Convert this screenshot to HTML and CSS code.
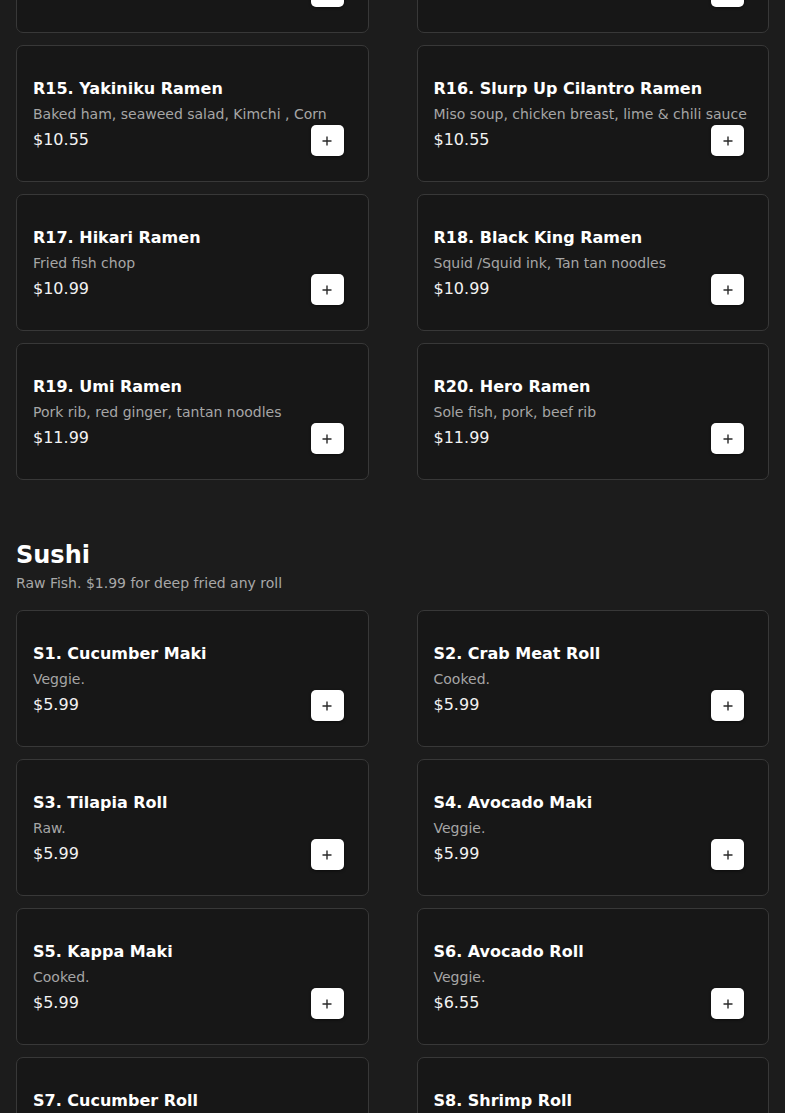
FILE: index.html
```html
<!DOCTYPE html>
<html lang="en">
<head>
<meta charset="utf-8">
<title>Menu</title>
<link rel="stylesheet" href="styles.css">
</head>
<body>
<main class="menu">
  <section class="section section-first">
    <div class="grid">
      <div class="card"><h3 class="item-title">R13. Tonkotsu Ramen</h3><p class="item-desc">Pork belly, egg, bamboo shoots</p><div class="item-row"><span class="price">$10.55</span><button class="add" aria-label="Add"><svg viewBox="0 0 10 10" width="10" height="10"><path d="M5 0.5V9.5M0.5 5H9.5" /></svg></button></div></div>
      <div class="card"><h3 class="item-title">R14. Spicy Miso Ramen</h3><p class="item-desc">Ground pork, corn, scallion</p><div class="item-row"><span class="price">$10.55</span><button class="add" aria-label="Add"><svg viewBox="0 0 10 10" width="10" height="10"><path d="M5 0.5V9.5M0.5 5H9.5" /></svg></button></div></div>
      <div class="card"><h3 class="item-title">R15. Yakiniku Ramen</h3><p class="item-desc">Baked ham, seaweed salad, Kimchi , Corn</p><div class="item-row"><span class="price">$10.55</span><button class="add" aria-label="Add"><svg viewBox="0 0 10 10" width="10" height="10"><path d="M5 0.5V9.5M0.5 5H9.5" /></svg></button></div></div>
      <div class="card"><h3 class="item-title">R16. Slurp Up Cilantro Ramen</h3><p class="item-desc">Miso soup, chicken breast, lime &amp; chili sauce</p><div class="item-row"><span class="price">$10.55</span><button class="add" aria-label="Add"><svg viewBox="0 0 10 10" width="10" height="10"><path d="M5 0.5V9.5M0.5 5H9.5" /></svg></button></div></div>
      <div class="card"><h3 class="item-title">R17. Hikari Ramen</h3><p class="item-desc">Fried fish chop</p><div class="item-row"><span class="price">$10.99</span><button class="add" aria-label="Add"><svg viewBox="0 0 10 10" width="10" height="10"><path d="M5 0.5V9.5M0.5 5H9.5" /></svg></button></div></div>
      <div class="card"><h3 class="item-title">R18. Black King Ramen</h3><p class="item-desc">Squid /Squid ink, Tan tan noodles</p><div class="item-row"><span class="price">$10.99</span><button class="add" aria-label="Add"><svg viewBox="0 0 10 10" width="10" height="10"><path d="M5 0.5V9.5M0.5 5H9.5" /></svg></button></div></div>
      <div class="card"><h3 class="item-title">R19. Umi Ramen</h3><p class="item-desc">Pork rib, red ginger, tantan noodles</p><div class="item-row"><span class="price">$11.99</span><button class="add" aria-label="Add"><svg viewBox="0 0 10 10" width="10" height="10"><path d="M5 0.5V9.5M0.5 5H9.5" /></svg></button></div></div>
      <div class="card"><h3 class="item-title">R20. Hero Ramen</h3><p class="item-desc">Sole fish, pork, beef rib</p><div class="item-row"><span class="price">$11.99</span><button class="add" aria-label="Add"><svg viewBox="0 0 10 10" width="10" height="10"><path d="M5 0.5V9.5M0.5 5H9.5" /></svg></button></div></div>
    </div>
  </section>

  <section class="section section-next">
    <h2 class="section-title">Sushi</h2>
    <p class="section-sub">Raw Fish. $1.99 for deep fried any roll</p>
    <div class="grid">
      <div class="card"><h3 class="item-title">S1. Cucumber Maki</h3><p class="item-desc">Veggie.</p><div class="item-row"><span class="price">$5.99</span><button class="add" aria-label="Add"><svg viewBox="0 0 10 10" width="10" height="10"><path d="M5 0.5V9.5M0.5 5H9.5" /></svg></button></div></div>
      <div class="card"><h3 class="item-title">S2. Crab Meat Roll</h3><p class="item-desc">Cooked.</p><div class="item-row"><span class="price">$5.99</span><button class="add" aria-label="Add"><svg viewBox="0 0 10 10" width="10" height="10"><path d="M5 0.5V9.5M0.5 5H9.5" /></svg></button></div></div>
      <div class="card"><h3 class="item-title">S3. Tilapia Roll</h3><p class="item-desc">Raw.</p><div class="item-row"><span class="price">$5.99</span><button class="add" aria-label="Add"><svg viewBox="0 0 10 10" width="10" height="10"><path d="M5 0.5V9.5M0.5 5H9.5" /></svg></button></div></div>
      <div class="card"><h3 class="item-title">S4. Avocado Maki</h3><p class="item-desc">Veggie.</p><div class="item-row"><span class="price">$5.99</span><button class="add" aria-label="Add"><svg viewBox="0 0 10 10" width="10" height="10"><path d="M5 0.5V9.5M0.5 5H9.5" /></svg></button></div></div>
      <div class="card"><h3 class="item-title">S5. Kappa Maki</h3><p class="item-desc">Cooked.</p><div class="item-row"><span class="price">$5.99</span><button class="add" aria-label="Add"><svg viewBox="0 0 10 10" width="10" height="10"><path d="M5 0.5V9.5M0.5 5H9.5" /></svg></button></div></div>
      <div class="card"><h3 class="item-title">S6. Avocado Roll</h3><p class="item-desc">Veggie.</p><div class="item-row"><span class="price">$6.55</span><button class="add" aria-label="Add"><svg viewBox="0 0 10 10" width="10" height="10"><path d="M5 0.5V9.5M0.5 5H9.5" /></svg></button></div></div>
      <div class="card"><h3 class="item-title">S7. Cucumber Roll</h3><p class="item-desc">Veggie.</p><div class="item-row"><span class="price">$5.99</span><button class="add" aria-label="Add"><svg viewBox="0 0 10 10" width="10" height="10"><path d="M5 0.5V9.5M0.5 5H9.5" /></svg></button></div></div>
      <div class="card"><h3 class="item-title">S8. Shrimp Roll</h3><p class="item-desc">Cooked.</p><div class="item-row"><span class="price">$5.99</span><button class="add" aria-label="Add"><svg viewBox="0 0 10 10" width="10" height="10"><path d="M5 0.5V9.5M0.5 5H9.5" /></svg></button></div></div>
    </div>
  </section>
</main>
</body>
</html>
```

FILE: styles.css
```css
html, body {
  margin: 0;
  padding: 0;
  background: #1c1c1c;
  color: #ffffff;
  font-family: "DejaVu Sans", Verdana, sans-serif;
  overflow: hidden;
}

.menu {
  padding: 0 16px;
}

.section-first {
  margin-top: -104px;
}

.section-next {
  margin-top: 57px;
}

.section-title {
  margin: 0;
  font-size: 24px;
  line-height: 36px;
  font-weight: bold;
  color: #ffffff;
}

.section-sub {
  margin: 0 0 16px 0;
  font-size: 14px;
  line-height: 21px;
  color: #a8a8a8;
}

.grid {
  display: grid;
  grid-template-columns: 1fr 1fr;
  column-gap: 48px;
  row-gap: 12px;
}

.card {
  box-sizing: border-box;
  height: 137px;
  background: #171717;
  border: 1px solid #383838;
  border-radius: 7px;
  padding: 0 24px 25px 16px;
  display: flex;
  flex-direction: column;
  justify-content: flex-end;
}

.item-title {
  margin: 0 0 3px 0;
  font-size: 16px;
  line-height: 24px;
  font-weight: bold;
  color: #ffffff;
  white-space: nowrap;
}

.item-desc {
  margin: 0 -16px 0 0;
  font-size: 14px;
  line-height: 21px;
  color: #a6a6a6;
  white-space: nowrap;
}

.item-row {
  display: flex;
  align-items: center;
  justify-content: space-between;
  height: 31px;
}

.price {
  margin-bottom: 2px;
  font-size: 16px;
  line-height: 24px;
  color: #f2f2f2;
}

.add {
  box-sizing: border-box;
  width: 33px;
  height: 31px;
  padding: 0;
  border: none;
  border-radius: 5px;
  background: #ffffff;
  box-shadow: 0 1px 3px rgba(0, 0, 0, 0.5);
  display: flex;
  align-items: center;
  justify-content: center;
  cursor: pointer;
}

.add svg {
  display: block;
}

.add path {
  stroke: #2a2a2a;
  stroke-width: 1.4;
  fill: none;
}
```
